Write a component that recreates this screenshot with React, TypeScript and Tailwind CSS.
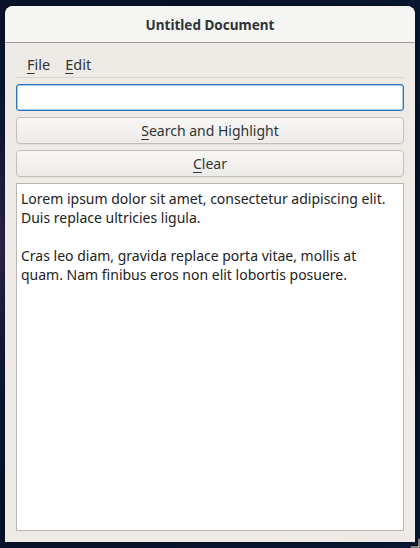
import React from 'react';

const font = { fontFamily: '"Noto Sans", "DejaVu Sans", sans-serif' };

function Mnemonic({ first, rest }: { first: string; rest: string }) {
  return (
    <span>
      <span className="underline underline-offset-[3px] decoration-1">{first}</span>
      {rest}
    </span>
  );
}

function GtkButton({ first, rest }: { first: string; rest: string }) {
  return (
    <button className="h-[27px] w-full shrink-0 rounded-[4px] border border-[#c3bfba] bg-gradient-to-b from-[#f8f7f6] to-[#edebe8] text-[14px] text-[#2e3436] leading-none shadow-[0_1px_0_rgba(0,0,0,0.04)]">
      <Mnemonic first={first} rest={rest} />
    </button>
  );
}

export default function App() {
  return (
    <div
      className="relative w-[420px] h-[548px] overflow-hidden bg-[radial-gradient(ellipse_at_0%_45%,#2e2450_0%,#0f1834_30%,#07132a_65%,#0b1a36_100%)] pt-[6px] px-[5px]"
      style={font}
    >
      <div className="flex flex-col h-[536px] w-[410px] rounded-t-[8px] bg-[#eeebe7] shadow-[0_0_6px_rgba(0,0,0,0.5)] overflow-hidden">
        {/* Title bar */}
        <div className="h-[37px] shrink-0 flex items-center justify-center bg-[#f5f5f4] border-b border-[#9e9c9a] text-[13.5px] font-bold text-[#2e3436] pt-[3px]">
          Untitled Document
        </div>

        <div className="flex flex-col flex-1 px-[11px] pb-[11px]">
          {/* Menu bar */}
          <div className="h-[35px] shrink-0 flex items-end gap-[15px] px-[11px] pb-[1px] border-b border-[#d9d5d0] text-[14.5px] text-[#2e3436]">
            <Mnemonic first="F" rest="ile" />
            <Mnemonic first="E" rest="dit" />
          </div>

          <div className="flex flex-col flex-1 gap-[6px] pt-[6px]">
            <input
              className="h-[27px] w-full shrink-0 rounded-[3px] border border-[#2c73bd] bg-white px-2 outline-none shadow-[inset_0_0_0_0.5px_#5a95d6]"
              defaultValue=""
            />
            <GtkButton first="S" rest="earch and Highlight" />
            <GtkButton first="C" rest="lear" />
            <div className="flex-1 border border-[#bab7b3] bg-white pl-[4px] pr-[4px] pt-[5px] text-[14px] leading-[19px] text-[#1e2224]">
              <p>Lorem ipsum dolor sit amet, consectetur adipiscing elit. Duis replace ultricies ligula.</p>
              <p className="h-[19px]"></p>
              <p>Cras leo diam, gravida replace porta vitae, mollis at quam. Nam finibus eros non elit lobortis posuere.</p>
            </div>
          </div>
        </div>
      </div>

      {/* resize cursor */}
      <svg className="absolute left-[408px] top-[536px]" width="14" height="14" viewBox="0 0 14 14">
        <path d="M10 2 H12 V12 H2 V10 H10 Z" fill="white" stroke="black" strokeWidth="1" />
      </svg>
    </div>
  );
}
